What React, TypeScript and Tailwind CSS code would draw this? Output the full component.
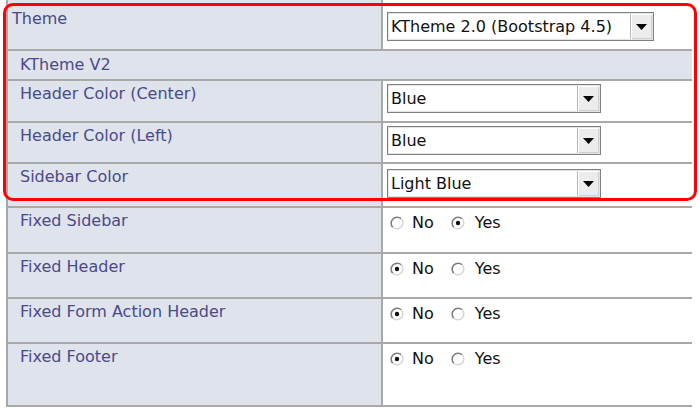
const font = { fontFamily: '"DejaVu Sans", Verdana, sans-serif' };

const Radio = ({ checked }: { checked?: boolean }) => (
  <svg width="14" height="14" viewBox="0 0 14 14" className="shrink-0">
    <circle cx="7" cy="7" r="6" fill="#fff" />
    <path d="M2.76 11.24 A6 6 0 0 1 11.24 2.76" fill="none" stroke="#7d7d7d" strokeWidth="1.5" />
    <path d="M11.24 2.76 A6 6 0 0 1 2.76 11.24" fill="none" stroke="#d6d6d6" strokeWidth="1.5" />
    {checked && <circle cx="7" cy="7" r="2.2" fill="#111" />}
  </svg>
);

const RadioPair = ({ yes }: { yes: boolean }) => (
  <div className="flex items-center pl-[3px] text-[16px] leading-[18px] text-[#111]">
    <Radio checked={!yes} />
    <span className="ml-[8px]">No</span>
    <span className="ml-[17px] flex items-center">
      <Radio checked={yes} />
      <span className="ml-[10px]">Yes</span>
    </span>
  </div>
);

const Select = ({ value, width }: { value: string; width: string }) => (
  <div
    className={`flex h-[29px] items-stretch border border-[#808080] bg-white p-[1px] shadow-[inset_0_0_0_1px_#e4e4e4] ${width}`}
  >
    <div className="flex flex-1 items-center pl-[2px] text-[16px] leading-[18px] text-[#111]">{value}</div>
    <div className="flex w-[22px] items-center justify-center border-l border-[#b9b9b9] bg-[#ececec] shadow-[inset_1px_1px_0_#fff,inset_-1px_-1px_0_#cfcfcf]">
      <svg width="11" height="6" viewBox="0 0 11 6">
        <path d="M0 0 H11 L5.5 6 Z" fill="#000" />
      </svg>
    </div>
  </div>
);

const Row = ({
  label,
  h,
  first,
  rightPad = 'pt-[5px]',
  children,
}: {
  label: string;
  h: string;
  first?: boolean;
  rightPad?: string;
  children?: React.ReactNode;
}) => (
  <div className={`grid grid-cols-[373px_1fr] border-t-2 border-[#a9a9a9] ${h}`}>
    <div className={`bg-[#dfe3ec] pt-[4px] text-[16px] leading-[18px] text-[#4a4a8a] ${first ? 'pl-[4px]' : 'pl-[12px]'}`}>
      {label}
    </div>
    <div className={`border-l-2 border-[#a9a9a9] bg-white pl-[4px] ${rightPad}`}>{children}</div>
  </div>
);

export default function App() {
  return (
    <div className="relative h-[408px] w-[700px] overflow-hidden bg-white" style={font}>
      <div className="ml-[6px] w-[686px] border-l-2 border-[#a9a9a9]">
        <div className="grid h-[4px] grid-cols-[373px_1fr]">
          <div className="bg-[#dfe3ec]" />
          <div className="border-l-2 border-[#a9a9a9] bg-white" />
        </div>
        <Row label="Theme" h="h-[45px]" first rightPad="pt-[6px]">
          <Select value="KTheme 2.0 (Bootstrap 4.5)" width="w-[267px]" />
        </Row>
        <div className="h-[30px] border-t-2 border-[#a9a9a9] bg-[#dfe3ec] pl-[12px] pt-[5px] text-[16px] leading-[18px] text-[#4a4a8a]">
          KTheme V2
        </div>
        <Row label="Header Color (Center)" h="h-[42px]" rightPad="pt-[3px]">
          <Select value="Blue" width="w-[214px]" />
        </Row>
        <Row label="Header Color (Left)" h="h-[41px]" rightPad="pt-[3px]">
          <Select value="Blue" width="w-[214px]" />
        </Row>
        <Row label="Sidebar Color" h="h-[44px]" rightPad="pt-[5px]">
          <Select value="Light Blue" width="w-[214px]" />
        </Row>
        <Row label="Fixed Sidebar" h="h-[46px]" rightPad="pt-[6px]">
          <RadioPair yes />
        </Row>
        <Row label="Fixed Header" h="h-[45px]" rightPad="pt-[6px]">
          <RadioPair yes={false} />
        </Row>
        <Row label="Fixed Form Action Header" h="h-[45px]" rightPad="pt-[6px]">
          <RadioPair yes={false} />
        </Row>
        <Row label="Fixed Footer" h="h-[63px]" rightPad="pt-[6px]">
          <RadioPair yes={false} />
        </Row>
        <div className="border-t-2 border-[#a9a9a9]" />
      </div>
      <div className="pointer-events-none absolute left-[3px] top-[3px] h-[198px] w-[694px] rounded-[10px] border-[3px] border-[#ff0000]" />
    </div>
  );
}
